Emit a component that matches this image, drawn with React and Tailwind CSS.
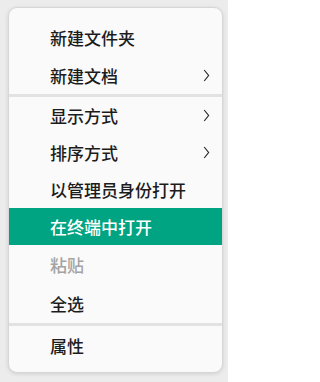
import React from "react";

const Chevron = () => (
  <svg width="7" height="13" viewBox="0 0 7 13" fill="none" className="shrink-0">
    <path d="M1.2 1 L5.6 6.5 L1.2 12" stroke="#2a2a2a" strokeWidth="1.2" />
  </svg>
);

const Item = ({ label, sub, active, disabled, h = "h-[38px]" }) => (
  <div
    className={`flex items-center justify-between pl-[41px] pr-[12px] ${h} ${
      active ? "bg-[#00a482] text-white" : disabled ? "text-[#a3a3a3]" : "text-[#1c1c1c]"
    }`}
  >
    <span>{label}</span>
    {sub && <Chevron />}
  </div>
);

const Separator = () => <div className="h-[3px] bg-[#e2e2e2]" />;

export default function App() {
  return (
    <div className="w-[228px] h-[382px] bg-[#ececec] pt-[7px] pl-[8px]">
      <div
        className="w-[215px] h-[366px] bg-[#fafafa] rounded-[9px] border border-[#d6d6d6] shadow-[0_1px_4px_rgba(0,0,0,0.12)] overflow-hidden pt-[10px] text-[17px] font-medium leading-none"
        style={{ fontFamily: '"Noto Sans CJK SC", "Noto Sans", sans-serif' }}
      >
        <Item label="新建文件夹" />
        <Item label="新建文档" sub />
        <Separator />
        <Item label="显示方式" sub h="h-[37px]" />
        <Item label="排序方式" sub h="h-[37px]" />
        <Item label="以管理员身份打开" h="h-[37px]" />
        <Item label="在终端中打开" active h="h-[37px]" />
        <Item label="粘贴" disabled h="h-[39px]" />
        <Item label="全选" h="h-[39px]" />
        <Separator />
        <Item label="属性" />
      </div>
    </div>
  );
}
